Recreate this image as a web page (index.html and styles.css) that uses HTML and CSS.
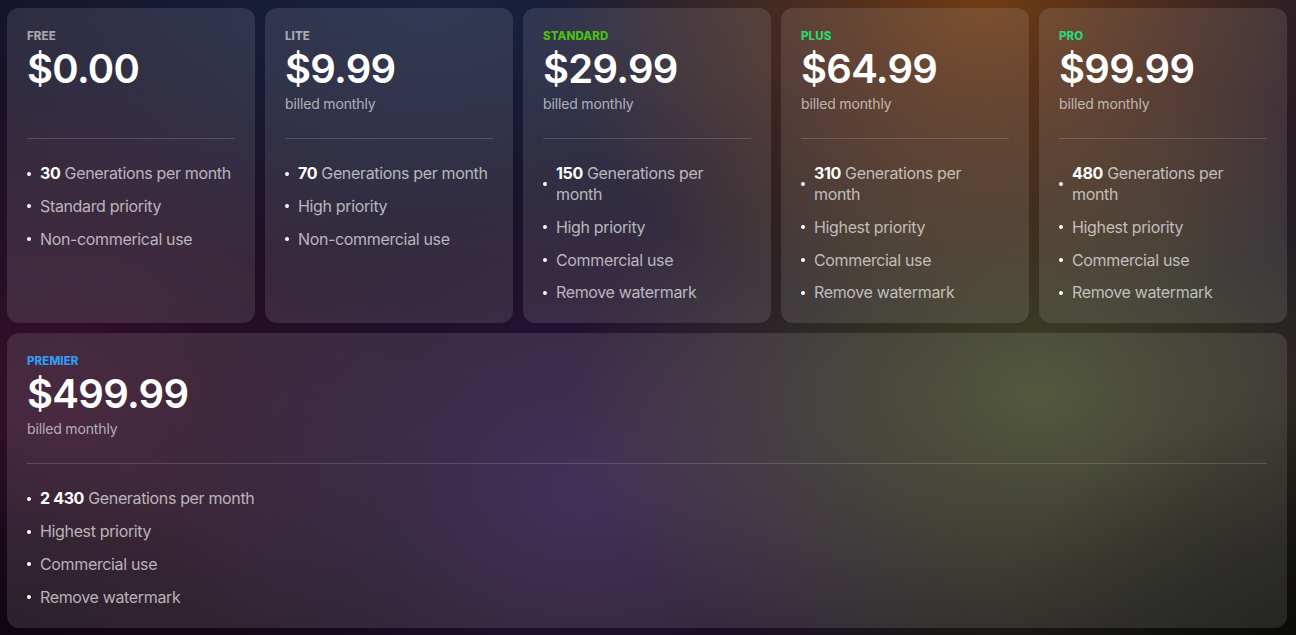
FILE: index.html
```html
<!DOCTYPE html>
<html lang="en">
<head>
<meta charset="utf-8">
<title>Pricing</title>
<link rel="stylesheet" href="styles.css">
</head>
<body>
<main class="plans">
  <div class="row">
    <section class="card">
      <header class="head">
        <div class="tier tier-free">FREE</div>
        <div class="price">$0.00</div>
      </header>
      <hr class="rule">
      <ul class="feats">
        <li><span><b>30</b> Generations per month</span></li>
        <li><span>Standard priority</span></li>
        <li><span>Non-commerical use</span></li>
      </ul>
    </section>
    <section class="card">
      <header class="head">
        <div class="tier tier-lite">LITE</div>
        <div class="price">$9.99</div>
        <div class="billed">billed monthly</div>
      </header>
      <hr class="rule">
      <ul class="feats">
        <li><span><b>70</b> Generations per month</span></li>
        <li><span>High priority</span></li>
        <li><span>Non-commercial use</span></li>
      </ul>
    </section>
    <section class="card">
      <header class="head">
        <div class="tier tier-standard">STANDARD</div>
        <div class="price">$29.99</div>
        <div class="billed">billed monthly</div>
      </header>
      <hr class="rule">
      <ul class="feats">
        <li><span><b>150</b> Generations per month</span></li>
        <li><span>High priority</span></li>
        <li><span>Commercial use</span></li>
        <li><span>Remove watermark</span></li>
      </ul>
    </section>
    <section class="card">
      <header class="head">
        <div class="tier tier-plus">PLUS</div>
        <div class="price">$64.99</div>
        <div class="billed">billed monthly</div>
      </header>
      <hr class="rule">
      <ul class="feats">
        <li><span><b>310</b> Generations per month</span></li>
        <li><span>Highest priority</span></li>
        <li><span>Commercial use</span></li>
        <li><span>Remove watermark</span></li>
      </ul>
    </section>
    <section class="card">
      <header class="head">
        <div class="tier tier-pro">PRO</div>
        <div class="price">$99.99</div>
        <div class="billed">billed monthly</div>
      </header>
      <hr class="rule">
      <ul class="feats">
        <li><span><b>480</b> Generations per month</span></li>
        <li><span>Highest priority</span></li>
        <li><span>Commercial use</span></li>
        <li><span>Remove watermark</span></li>
      </ul>
    </section>
  </div>
  <section class="card card-wide">
    <header class="head">
      <div class="tier tier-premier">PREMIER</div>
      <div class="price">$499.99</div>
      <div class="billed">billed monthly</div>
    </header>
    <hr class="rule">
    <ul class="feats">
      <li><span><b>2 430</b> Generations per month</span></li>
      <li><span>Highest priority</span></li>
      <li><span>Commercial use</span></li>
      <li><span>Remove watermark</span></li>
    </ul>
  </section>
</main>
</body>
</html>
```

FILE: styles.css
```css
* { box-sizing: border-box; }
html, body { height: 100%; }
body {
  margin: 0;
  font-family: Inter, "Noto Sans", "Liberation Sans", sans-serif;
  color: #fff;
  background-color: #140b18;
  background-image:
    radial-gradient(ellipse 30% 45% at 100% 100%, rgba(8, 10, 4, 0.75), transparent 80%),
    radial-gradient(ellipse 25% 40% at 0% 100%, rgba(10, 4, 14, 0.7), transparent 80%),
    radial-gradient(ellipse 42% 65% at 76% 0%, rgba(120, 64, 18, 0.9), transparent 80%),
    radial-gradient(ellipse 45% 65% at 80% 62%, rgba(72, 82, 38, 0.8), transparent 80%),
    radial-gradient(ellipse 40% 60% at 45% 78%, rgba(52, 28, 84, 0.75), transparent 80%),
    radial-gradient(ellipse 35% 70% at 5% 65%, rgba(66, 18, 48, 0.65), transparent 80%),
    radial-gradient(ellipse 45% 55% at 33% 0%, rgba(28, 44, 78, 0.6), transparent 80%),
    linear-gradient(180deg, #15132a 0%, #1a0c1e 60%, #0e0810 100%);
  overflow: hidden;
}
.plans {
  display: flex;
  flex-direction: column;
  gap: 10px;
  padding: 8px 9px 8px 7px;
}
.row {
  display: grid;
  grid-template-columns: repeat(5, 1fr);
  gap: 10px;
}
.card {
  background: rgba(255, 255, 255, 0.11);
  border-radius: 12px;
  padding: 20px;
}
.head {
  height: 110px;
  padding-top: 1px;
}
.tier {
  font-size: 11.5px;
  font-weight: 800;
  line-height: 14px;
  letter-spacing: 0.1px;
}
.tier-free { color: #a7a3ab; }
.tier-lite { color: #a8a8b2; }
.tier-standard { color: #4dbf14; }
.tier-plus { color: #2fd66b; }
.tier-pro { color: #2ad67e; }
.tier-premier { color: #2f9cf5; }
.price {
  font-size: 40px;
  font-weight: 600;
  line-height: 48px;
  letter-spacing: -0.7px;
  margin-top: 2px;
}
.billed {
  font-size: 14px;
  line-height: 18px;
  color: rgba(255, 255, 255, 0.62);
  margin-top: 2px;
  letter-spacing: -0.15px;
}
.rule {
  border: 0;
  height: 1px;
  background: rgba(255, 255, 255, 0.16);
  margin: 0;
}
.feats {
  list-style: none;
  margin: 24px 0 0;
  padding: 0;
  display: flex;
  flex-direction: column;
  gap: 11.8px;
}
.feats li {
  display: flex;
  align-items: center;
  gap: 9px;
  font-size: 16px;
  line-height: 21px;
  color: rgba(255, 255, 255, 0.66);
  letter-spacing: -0.35px;
}
.feats li::before {
  content: "";
  flex: none;
  width: 4px;
  height: 4px;
  border-radius: 50%;
  background: #fff;
}
.feats b {
  color: #fff;
  font-weight: 700;
}
```
